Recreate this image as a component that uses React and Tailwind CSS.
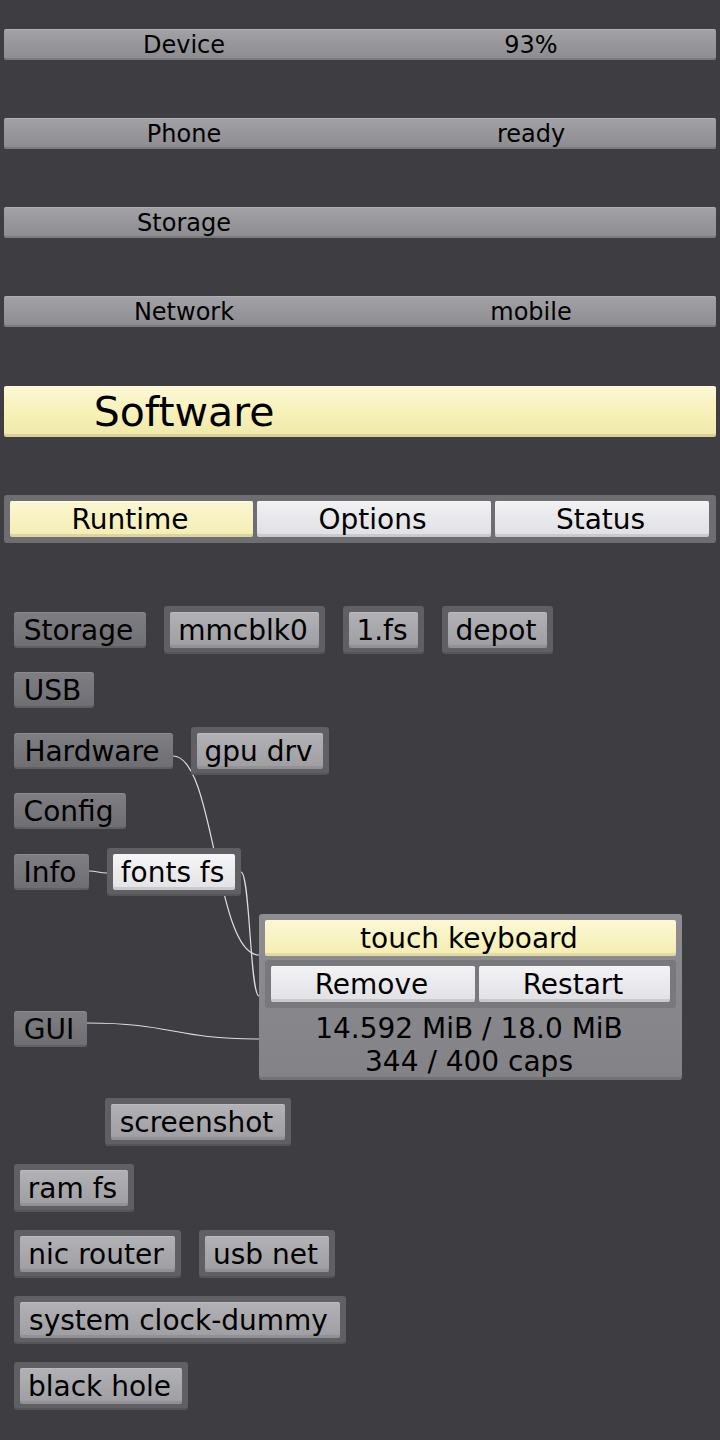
import React from "react";

const barCls =
  "grid grid-cols-[362px_332px] h-[31px] rounded-[2px] bg-linear-to-b from-[#a3a3a7] via-[#97979b] to-[#8c8c90] shadow-[inset_0_-2px_0_rgba(0,0,0,0.12),inset_0_1px_0_rgba(255,255,255,0.15)] text-[24px] leading-[33px] overflow-hidden";

function Bar({ left, right }) {
  return (
    <div className={barCls}>
      <div className="text-center pr-[2px]">{left}</div>
      <div className="text-center pr-[2px]">{right}</div>
    </div>
  );
}

function Label({ w, children }) {
  return (
    <div
      className={`${w} h-[36px] overflow-hidden rounded-[3px] bg-linear-to-b from-[#7e7e83] to-[#6d6d72] shadow-[inset_0_-2px_0_rgba(0,0,0,0.12),inset_0_1px_0_rgba(255,255,255,0.1)] text-center leading-[38px] pr-[3px] shrink-0`}
    >
      {children}
    </div>
  );
}

function Framed({ w, children, white }) {
  return (
    <div className="rounded-[3px] bg-[#5f5f64] p-[6px] shrink-0 shadow-[inset_0_-2px_0_rgba(0,0,0,0.1)]">
      <div
        className={
          white
            ? `${w} h-[36px] overflow-hidden rounded-[2px] bg-linear-to-b from-[#f6f6f8] to-[#e2e2e6] shadow-[inset_0_-3px_0_rgba(0,0,0,0.1)] text-center leading-[38px] pr-[3px]`
            : `${w} h-[36px] overflow-hidden rounded-[2px] bg-linear-to-b from-[#b2b2b6] to-[#9e9ea2] shadow-[inset_0_-3px_0_rgba(0,0,0,0.08),inset_0_1px_0_rgba(255,255,255,0.15)] text-center leading-[38px] pr-[3px]`
        }
      >
        {children}
      </div>
    </div>
  );
}

const tabBase =
  "h-[36px] overflow-hidden rounded-[2px] text-center leading-[38px] pr-[3px] shadow-[inset_0_-3px_0_rgba(0,0,0,0.1),inset_0_1px_0_rgba(255,255,255,0.5)]";

export default function App() {
  return (
    <div className="relative isolate w-[720px] min-h-[1440px] bg-[#3e3d42] text-black font-['DejaVu_Sans',sans-serif] pt-[29px] overflow-hidden">
      <svg
        className="absolute left-0 top-0 -z-10 pointer-events-none"
        width="720"
        height="1440"
        viewBox="0 0 720 1440"
        fill="none"
      >
        <g stroke="#dedede" strokeWidth="1.2" fill="none">
          <path d="M173 756 C215 756 215 955 259 955" />
          <path d="M241 872 C250 872 250 996 259 996" />
          <path d="M89 871 C98 871 98 873 107 873" />
          <path d="M87 1023 C173 1023 173 1039 259 1039" />
        </g>
      </svg>

      <div className="flex flex-col gap-[58px] px-[4px]">
        <Bar left="Device" right="93%" />
        <Bar left="Phone" right="ready" />
        <Bar left="Storage" right="" />
        <Bar left="Network" right="mobile" />
      </div>

      <div className="mx-[4px] mt-[59px] h-[51px] overflow-hidden rounded-[2px] bg-linear-to-b from-[#fcf8d6] via-[#f8f1b9] to-[#efe8aa] shadow-[inset_0_-3px_0_rgba(0,0,0,0.1)] grid grid-cols-[362px_1fr] text-[41px] leading-[53px]">
        <div className="text-center pr-[2px]">Software</div>
        <div />
      </div>

      <div className="mx-[4px] mt-[58px] h-[48px] rounded-[3px] bg-[#6e6e72] pl-[6px] pt-[6px] flex gap-[4px] text-[28px]">
        <div className={`${tabBase} w-[243px] bg-linear-to-b from-[#fbf7d2] to-[#f4edb2]`}>Runtime</div>
        <div className={`${tabBase} w-[234px] bg-linear-to-b from-[#f1f1f4] to-[#e0e0e4]`}>Options</div>
        <div className={`${tabBase} w-[214px] bg-linear-to-b from-[#f1f1f4] to-[#e0e0e4]`}>Status</div>
      </div>

      <div className="mt-[63px] px-[14px] flex flex-col text-[28px]">
        <div className="flex items-center gap-[18px] h-[48px]">
          <Label w="w-[132px]">Storage</Label>
          <Framed w="w-[149px]">mmcblk0</Framed>
          <Framed w="w-[69px]">1.fs</Framed>
          <Framed w="w-[99px]">depot</Framed>
        </div>
        <div className="flex items-center gap-[18px] h-[48px] mt-[12px]">
          <Label w="w-[80px]">USB</Label>
        </div>
        <div className="flex items-center gap-[18px] h-[48px] mt-[13px]">
          <Label w="w-[159px]">Hardware</Label>
          <Framed w="w-[126px]">gpu drv</Framed>
        </div>
        <div className="flex items-center gap-[18px] h-[48px] mt-[12px]">
          <Label w="w-[112px]">Config</Label>
        </div>
        <div className="flex items-center gap-[18px] h-[48px] mt-[13px]">
          <Label w="w-[75px]">Info</Label>
          <Framed w="w-[122px]" white>
            fonts fs
          </Framed>
        </div>
        <div className="flex items-start mt-[18px]">
          <div className="mt-[97px]">
            <Label w="w-[73px]">GUI</Label>
          </div>
          <div className="ml-[172px] w-[423px] h-[166px] rounded-[3px] bg-linear-to-b from-[#8e8e92] to-[#838387] shadow-[inset_0_-3px_0_rgba(0,0,0,0.12)] p-[6px]">
            <div className="h-[36px] overflow-hidden rounded-[2px] bg-linear-to-b from-[#fcf8d4] to-[#f4edb0] shadow-[inset_0_-3px_0_rgba(0,0,0,0.08)] text-center leading-[38px] pr-[3px]">
              touch keyboard
            </div>
            <div className="mt-[4px] h-[48px] rounded-[3px] bg-[#79797d] p-[6px] flex gap-[4px]">
              <div className={`${tabBase} w-[204px] bg-linear-to-b from-[#f3f3f6] to-[#e1e1e5]`}>Remove</div>
              <div className={`${tabBase} w-[191px] bg-linear-to-b from-[#f3f3f6] to-[#e1e1e5]`}>Restart</div>
            </div>
            <div className="mt-[4px] text-center leading-[33px] pr-[3px]">
              <div>14.592 MiB / 18.0 MiB</div>
              <div>344 / 400 caps</div>
            </div>
          </div>
        </div>
        <div className="flex mt-[18px] pl-[91px]">
          <Framed w="w-[174px]">screenshot</Framed>
        </div>
        <div className="flex mt-[18px]">
          <Framed w="w-[108px]">ram fs</Framed>
        </div>
        <div className="flex gap-[18px] mt-[18px]">
          <Framed w="w-[155px]">nic router</Framed>
          <Framed w="w-[124px]">usb net</Framed>
        </div>
        <div className="flex mt-[18px]">
          <Framed w="w-[320px]">system clock-dummy</Framed>
        </div>
        <div className="flex mt-[18px]">
          <Framed w="w-[162px]">black hole</Framed>
        </div>
      </div>
    </div>
  );
}
